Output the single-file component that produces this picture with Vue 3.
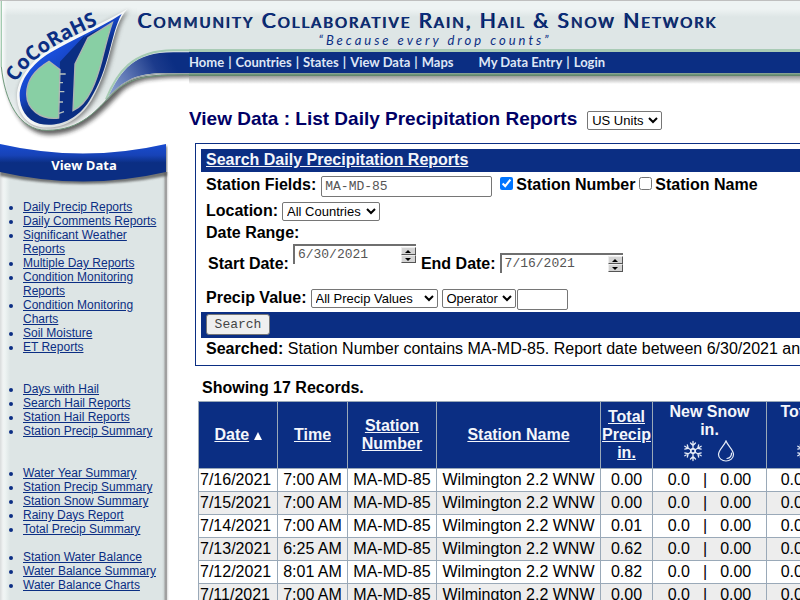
<script setup>
import { ref } from 'vue'

const linkGroups = [
  {
    links: [
      'Daily Precip Reports',
      'Daily Comments Reports',
      'Significant Weather Reports',
      'Multiple Day Reports',
      'Condition Monitoring Reports',
      'Condition Monitoring Charts',
      'Soil Moisture',
      'ET Reports',
    ],
  },
  { links: ['Days with Hail', 'Search Hail Reports', 'Station Hail Reports', 'Station Precip Summary'] },
  {
    links: [
      'Water Year Summary',
      'Station Precip Summary',
      'Station Snow Summary',
      'Rainy Days Report',
      'Total Precip Summary',
    ],
  },
  { close: true, links: ['Station Water Balance', 'Water Balance Summary', 'Water Balance Charts'] },
]

const siteLinks = ['Home', 'Countries', 'States', 'View Data', 'Maps']
const userLinks = ['My Data Entry', 'Login']

const records = [
  { date: '7/16/2021', time: '7:00 AM', precip: '0.00' },
  { date: '7/15/2021', time: '7:00 AM', precip: '0.00' },
  { date: '7/14/2021', time: '7:00 AM', precip: '0.01' },
  { date: '7/13/2021', time: '6:25 AM', precip: '0.62' },
  { date: '7/12/2021', time: '8:01 AM', precip: '0.82' },
  { date: '7/11/2021', time: '7:00 AM', precip: '0.00' },
]

const station = ref('MA-MD-85')
const startDate = ref('6/30/2021')
const endDate = ref('7/16/2021')
const byNumber = ref(true)
const byName = ref(false)
const precipValue = ref('')

function step(target, days) {
  const d = new Date(target.value)
  d.setDate(d.getDate() + days)
  target.value = `${d.getMonth() + 1}/${d.getDate()}/${d.getFullYear()}`
}
const stepStart = (n) => step(startDate, n)
const stepEnd = (n) => step(endDate, n)
</script>

<template>
  <div class="page">
    <aside class="left">
      <svg class="logo" viewBox="0 0 567 432" role="img" aria-label="CoCoRaHS">
        <defs>
          <linearGradient id="panel" x1="0" y1="0" x2="0" y2="1">
            <stop offset="0" stop-color="#eef3f3" />
            <stop offset="0.06" stop-color="#eef3f3" />
            <stop offset="0.12" stop-color="#dee6e6" />
            <stop offset="0.7" stop-color="#dee6e6" />
            <stop offset="1" stop-color="#f4f6f6" />
          </linearGradient>
          <linearGradient id="glow" x1="0" y1="0" x2="1" y2="0">
            <stop offset="0" stop-color="#fff" stop-opacity="0.9" />
            <stop offset="0.12" stop-color="#fff" stop-opacity="0" />
          </linearGradient>
          <linearGradient id="band" gradientUnits="userSpaceOnUse" x1="325" y1="285" x2="520" y2="185">
            <stop offset="0" stop-color="#8ea4d2" />
            <stop offset="0.35" stop-color="#5d76b4" />
            <stop offset="0.75" stop-color="#1c3b8c" />
            <stop offset="1" stop-color="#0b2e83" />
          </linearGradient>
          <linearGradient id="dropblue" gradientUnits="userSpaceOnUse" x1="120" y1="140" x2="230" y2="270">
            <stop offset="0" stop-color="#1c57ee" />
            <stop offset="0.5" stop-color="#1644c2" />
            <stop offset="0.75" stop-color="#0b2e83" />
          </linearGradient>
          <linearGradient id="rim" x1="0" y1="0" x2="1" y2="1">
            <stop offset="0" stop-color="#fff" />
            <stop offset="0.55" stop-color="#f3f5f5" />
            <stop offset="1" stop-color="#a8adad" />
          </linearGradient>
          <filter id="soft" x="-20%" y="-20%" width="140%" height="140%">
            <feGaussianBlur stdDeviation="7" />
          </filter>
        </defs>
        <path d="M12 200C20 300 60 402 145 404C255 406 315 325 365 275C415 234 450 232 640 232V150H12Z" fill="#222" opacity="0.7" filter="url(#soft)" />
        <path d="M5 0V200C14 300 55 390 140 391C245 391 290 330 340 275C395 222 450 223 600 222V0Z" fill="url(#panel)" />
        <path d="M5 0V200C14 300 55 390 140 391V0Z" fill="url(#glow)" />
        <path d="M324 291C365 210 400 157 520 157H600V219H500C410 219 375 238 324 291Z" fill="url(#band)" />
        <path d="M318 298C350 220 395 151 520 151H600" fill="none" stroke="#a5cbb2" stroke-width="6" />
        <path d="M318 301C370 240 410 221 500 221H600" fill="none" stroke="#9aa5a5" stroke-width="4" />
        <path d="M4 0V200C14 300 55 391 140 391C245 391 290 330 340 279C395 227 450 224 600 224" fill="none" stroke="#719b7e" stroke-width="3" />
        <path d="M4 0V200" fill="none" stroke="#a9d2b7" stroke-width="3" />
        <path d="M0 1.500H600" stroke="#bfbfbf" stroke-width="3" />
        <path d="M389 31C340 75 350 200 278 310C232 380 164 390 120 382C80 374 56 338 55 290C54 235 107 184 150 155C230 104 300 80 389 31Z" fill="#555" opacity="0.7" filter="url(#soft)" />
        <path d="M383 26C332 80 340 187 275 300C228 378 162 389 117 380C78 372 51 335 51 288C51 235 100 176 150 147C230 99 300 76 383 26Z" fill="url(#rim)" />
        <path d="M365 42C330 105 331 205 268 302C226 367 165 382 118 371C80 360 59 326 59 287C59 240 97 190 150 158C222 116 290 90 365 42Z" fill="url(#dropblue)" />
        <path d="M337 69C316 135 318 240 235 337L205 349L213 190L255 110C280 95 310 84 337 69Z" fill="#0b2e83" />
        <path d="M180 185L255 105L225 195L219 340L177 352Z" fill="#0b2e83" />
        <path d="M147 184L180 209L176 354C120 361 80 326 80 282C80 241 108 207 147 184Z" fill="#88cfa4" stroke="#aeb5b2" stroke-width="4" />
        <path d="M337 68L264 113L225 192L219 332C268 310 291 238 306 180C316 140 325 102 337 68Z" fill="#88cfa4" stroke="#aeb5b2" stroke-width="4" />
        <path d="M179 222H197M178 248H189M178 275H193M177 306H189M177 340L192 335" stroke="#b9c2c0" stroke-width="4" />
        <path id="arch" d="M50 248C80 186 155 130 345 52" fill="none" />
        <text class="logo-text"><textPath href="#arch">CoCoRaHS</textPath></text>
      </svg>

      <nav class="side" aria-label="View Data">
        <div class="side-head">
          <svg viewBox="0 0 168 42" preserveAspectRatio="none" aria-hidden="true">
            <defs>
              <linearGradient id="cap" x1="0" y1="0" x2="0" y2="1">
                <stop offset="0" stop-color="#184bd0" />
                <stop offset="0.3" stop-color="#1743b7" />
                <stop offset="0.5" stop-color="#0b2e83" />
                <stop offset="1" stop-color="#0b2e83" />
              </linearGradient>
              <filter id="capshade" x="-10%" y="-10%" width="120%" height="140%">
                <feGaussianBlur stdDeviation="1" />
              </filter>
            </defs>
            <path d="M0 2Q83 21 167 2V32Q83 48 0 32Z" fill="#444" opacity="0.7" filter="url(#capshade)" />
            <path d="M0 0Q83 19 166 0V28Q83 47 0 28Z" fill="url(#cap)" />
          </svg>
          <h2>View Data</h2>
        </div>
        <ul v-for="(group, i) in linkGroups" :key="i" :class="{ close: group.close }">
          <li v-for="link in group.links" :key="link"><a href="#">{{ link }}</a></li>
        </ul>
      </nav>
    </aside>

    <header class="masthead">
      <div class="name">Community Collaborative Rain, Hail &amp; Snow Network</div>
      <div class="motto">“Because every drop counts”</div>
    </header>

    <nav class="topnav" aria-label="Site">
      <div class="nav-group">
        <template v-for="(link, i) in siteLinks" :key="link">
          <span v-if="i">|</span><a href="#">{{ link }}</a>
        </template>
      </div>
      <div class="nav-group">
        <template v-for="(link, i) in userLinks" :key="link">
          <span v-if="i">|</span><a href="#">{{ link }}</a>
        </template>
      </div>
    </nav>

    <main>
      <div class="title">
        <h1>View Data : List Daily Precipitation Reports</h1>
        <select class="units" aria-label="Units"><option>US Units</option></select>
      </div>

      <form class="search" @submit.prevent>
        <div class="bar"><a href="#">Search Daily Precipitation Reports</a></div>
        <div class="row fields">
          <label for="station">Station Fields:</label>
          <input id="station" v-model="station" class="station" type="text" />
          <div class="checks">
            <input id="byNumber" v-model="byNumber" type="checkbox" /><label for="byNumber">Station Number</label>
            <input id="byName" v-model="byName" type="checkbox" /><label for="byName">Station Name</label>
          </div>
        </div>
        <div class="row">
          <label for="country">Location:</label>
          <select id="country" class="country"><option>All Countries</option></select>
        </div>
        <div class="row"><b>Date Range:</b></div>
        <div class="dates">
          <label for="start">Start Date:</label>
          <div class="date raised">
            <input id="start" v-model="startDate" type="text" />
            <div class="spin">
              <button type="button" aria-label="Later start date" @click="stepStart(1)"><svg viewBox="0 0 6 3"><path d="M0 3L3 0L6 3Z" /></svg></button>
              <button type="button" aria-label="Earlier start date" @click="stepStart(-1)"><svg viewBox="0 0 6 3"><path d="M0 0H6L3 3Z" /></svg></button>
            </div>
          </div>
          <label for="end">End Date:</label>
          <div class="date">
            <input id="end" v-model="endDate" type="text" />
            <div class="spin">
              <button type="button" aria-label="Later end date" @click="stepEnd(1)"><svg viewBox="0 0 6 3"><path d="M0 3L3 0L6 3Z" /></svg></button>
              <button type="button" aria-label="Earlier end date" @click="stepEnd(-1)"><svg viewBox="0 0 6 3"><path d="M0 0H6L3 3Z" /></svg></button>
            </div>
          </div>
        </div>
        <div class="row precip">
          <label for="precip">Precip Value:</label>
          <select id="precip" class="values"><option>All Precip Values</option></select>
          <div class="pair">
            <select class="operator" aria-label="Operator"><option>Operator</option></select>
            <input v-model="precipValue" class="amount" type="text" aria-label="Precip amount" />
          </div>
        </div>
        <div class="bar submit"><button type="submit">Search</button></div>
        <p class="searched"><b>Searched:</b> Station Number contains MA-MD-85. Report date between 6/30/2021 and 7/16/2021.</p>
      </form>

      <p class="count">Showing 17 Records.</p>

      <table>
        <colgroup>
          <col class="c-date" /><col class="c-time" /><col class="c-num" /><col class="c-name" />
          <col class="c-precip" /><col class="c-snow" /><col class="c-total" />
        </colgroup>
        <thead>
          <tr>
            <th><a href="#">Date</a> <svg class="sort" viewBox="0 0 8 8" aria-hidden="true"><path d="M0 8L4 0L8 8Z" fill="#fff" /></svg></th>
            <th><a href="#">Time</a></th>
            <th><a href="#">Station Number</a></th>
            <th><a href="#">Station Name</a></th>
            <th><a href="#">Total Precip in.</a></th>
            <th v-for="kind in ['New Snow', 'Total Snow']" :key="kind" class="snow">
              {{ kind }}<br />in.
              <div class="icons">
                <svg viewBox="0 0 20 22" fill="none" stroke="#e6ecf7" stroke-width="1.300" stroke-linecap="round">
                  <g v-for="a in [0, 60, 120, 180, 240, 300]" :key="a" :transform="`rotate(${a} 10 11)`">
                    <path d="M10 9V1.500M7.500 3L10 5.500L12.500 3M8 9.600L10 8.400L12 9.600" />
                  </g>
                </svg>
                <svg viewBox="0 0 20 22" fill="none" stroke="#e6ecf7" stroke-width="1.200" stroke-linecap="round">
                  <path d="M10 1C8 6 2.500 10 2.500 14.500A7.500 6.500 0 0 0 17.500 14.500C17.500 10 12 6 10 1Z" />
                  <path d="M15.500 13C15.700 16 13.800 18 11 18.500" />
                </svg>
              </div>
            </th>
          </tr>
        </thead>
        <tbody>
          <tr v-for="r in records" :key="r.date">
            <td class="start">{{ r.date }}</td>
            <td>{{ r.time }}</td>
            <td>MA-MD-85</td>
            <td>Wilmington 2.2 WNW</td>
            <td>{{ r.precip }}</td>
            <td v-for="n in 2" :key="n">
              <div class="amounts"><span>0.0</span><span>|</span><span>0.00</span></div>
            </td>
          </tr>
        </tbody>
      </table>
    </main>
  </div>
</template>

<style>
body {
  background: #fff;
  overflow-x: hidden;
}
</style>

<style scoped>
* {
  box-sizing: border-box;
}
.page {
  display: grid;
  grid-template-columns: 137px 52px minmax(0, 1fr);
  grid-template-rows: 49px 35px auto;
  height: 100vh;
  overflow: hidden;
  font-family: "Liberation Sans", Arial, sans-serif;
  font-size: 16px;
  line-height: 18px;
  color: #000;
}
.left {
  grid-column: 1 / 3;
  grid-row: 1 / 4;
  display: flex;
  flex-direction: column;
}
.logo {
  display: block;
  width: 189px;
  height: 144px;
  flex: none;
}
.logo-text {
  font: bold 60px "Open Sans", sans-serif;
  fill: #0b2e83;
}
.side {
  flex: 1;
  width: 169px;
  padding-bottom: 8px;
  background: linear-gradient(90deg, #d8dbdb 0, #f0f3f3 3px, #eef4f3 5px, #dde5e5 10px, #dde5e5 162px, #cdd5d5 164px, #a0a0a0 165px, #a0a0a0 167px, #dcdcdc 167px, #fff 169px) 0 28px no-repeat;
}
.side-head {
  display: grid;
  width: 168px;
  height: 42px;
}
.side-head > * {
  grid-area: 1 / 1;
}
.side-head svg {
  width: 100%;
  height: 100%;
}
.side-head h2 {
  margin: 0;
  align-self: center;
  text-align: center;
  color: #fff;
  font: bold 13px "Open Sans", sans-serif;
}
.side ul {
  margin: 28px 0 0;
  padding: 0 8px 0 23px;
  color: #0b2e83;
  font-size: 12px;
  line-height: 14px;
}
.side-head + ul,
.side ul.close {
  margin-top: 14px;
}
.side a {
  color: #0b2e83;
}
.masthead {
  grid-column: 2 / 4;
  grid-row: 1;
  padding-top: 9px;
  border-top: 1px solid #bfbfbf;
  background: linear-gradient(#eef3f3, #eef3f3 8px, #dee6e6 16px);
  white-space: nowrap;
}
.name {
  color: #0b2e83;
  font: 21px/20px Lato, sans-serif;
  font-variant: small-caps;
  letter-spacing: 2px;
  text-shadow: 1px 0 0 #06173f;
}
.motto {
  width: 596px;
  text-align: center;
  color: #0b2e83;
  font: italic 13px/20px Lato, sans-serif;
  letter-spacing: 3px;
}
.topnav {
  grid-column: 3;
  grid-row: 2;
  display: flex;
  align-items: flex-start;
  gap: 25px;
  height: 35px;
  padding-top: 4px;
  color: #dfe6f5;
  font: bold 13px/18px Lato, sans-serif;
  white-space: nowrap;
  background: linear-gradient(#a9cbb5 3px, #0b2e83 3px, #0b2e83 24px, #9da6a6 24px, #719b7e 25px, #5f7f69 27px, #999 27px, #fff 35px);
}
.nav-group {
  display: flex;
  gap: 4px;
}
.topnav a {
  color: inherit;
  text-decoration: none;
}
main {
  grid-column: 3;
  grid-row: 3;
  overflow: hidden;
  padding-top: 24px;
}
.title {
  display: flex;
  align-items: center;
  gap: 10px;
  height: 24px;
}
h1 {
  margin: 0 0 2px;
  font-size: 19px;
  line-height: 20px;
  color: #000066;
  white-space: nowrap;
}
select {
  height: 19px;
  margin: 0;
  padding: 0;
  border: 1px solid #767676;
  border-radius: 2px;
  background-color: #fff;
  color: #000;
  font: 13px "Liberation Sans", Arial, sans-serif;
}
.units {
  width: 75px;
}
.country {
  width: 98px;
}
.values {
  width: 127px;
}
.operator {
  width: 74px;
}
.search {
  width: 700px;
  margin: 11px 0 0 6px;
  padding: 5px;
  border: 1px solid #0b2e83;
  white-space: nowrap;
}
.bar {
  height: 23px;
  padding: 2px 5px;
  background: #0b2e83;
  font-weight: bold;
}
.bar a,
th a {
  color: #f4f6fb;
}
.row {
  display: flex;
  align-items: center;
  gap: 4px;
  height: 22px;
  padding-left: 5px;
}
.row.fields {
  height: 28px;
  gap: 5px;
  align-items: flex-start;
  padding-top: 4px;
}
.row.precip {
  height: 26px;
  align-items: flex-start;
  padding-top: 3px;
}
.row label,
.dates label {
  font-weight: bold;
}
input[type="text"] {
  margin: 0;
  padding: 1px 3px;
  border: 1px solid #767676;
  border-radius: 2px;
  background: #fff;
  color: #555;
  font: 13px "Liberation Mono", monospace;
}
.fields label {
  height: 18px;
}
.station {
  width: 171px;
  height: 21px;
}
.checks {
  display: flex;
  align-items: flex-start;
  padding-left: 3px;
}
.checks input {
  width: 13px;
  height: 13px;
  margin: 1px 3px 0 0;
}
.checks label + input {
  margin-left: 4px;
}
.dates {
  display: flex;
  align-items: flex-start;
  gap: 4px;
  height: 42px;
  padding: 9px 0 0 7px;
}
.dates label {
  padding-top: 2px;
}
.date {
  display: flex;
  width: 123px;
  height: 20px;
  margin-right: 1px;
  border-top: 2px solid #6f6f6f;
  border-left: 2px solid #6f6f6f;
}
.raised {
  margin-top: -9px;
}
.date input[type="text"] {
  flex: 1;
  min-width: 0;
  height: 16px;
  padding: 0 3px;
  border: 0;
}
.spin {
  display: flex;
  flex-direction: column;
  width: 15px;
  padding-top: 1px;
}
.spin button {
  display: flex;
  align-items: center;
  justify-content: center;
  height: 8px;
  padding: 0;
  border: 1px solid;
  border-color: #eee #555 #555 #eee;
  background: #d4d4d4;
}
.spin svg {
  width: 6px;
  height: 3px;
}
.pair {
  display: flex;
  align-items: flex-start;
  gap: 1px;
}
.amount {
  width: 51px;
  height: 21px;
}
.submit {
  height: 26px;
}
.submit button {
  display: block;
  width: 64px;
  height: 21px;
  padding: 0;
  border: 1px solid #767676;
  border-radius: 3px;
  background: #efefef;
  color: #444;
  font: 13px "Liberation Mono", monospace;
}
.searched {
  margin: 0;
  padding: 2px 5px;
}
.count {
  margin: 13px 0 4px 13px;
  font-weight: bold;
}
table {
  width: 681px;
  margin-left: 9px;
  table-layout: fixed;
  border-collapse: collapse;
}
.c-date {
  width: 79px;
}
.c-time {
  width: 70px;
}
.c-num {
  width: 89px;
}
.c-name {
  width: 164px;
}
.c-precip {
  width: 52px;
}
.c-snow {
  width: 114px;
}
.c-total {
  width: 112px;
}
th,
td {
  padding: 2px 1px;
  border: 1px solid #9aa9b8;
  text-align: center;
}
td {
  white-space: nowrap;
}
th {
  height: 67px;
  padding: 0 1px;
  background: #0b2e83;
  color: #f4f6fb;
}
th.snow {
  padding-top: 1px;
  vertical-align: top;
}
tbody tr {
  height: 23px;
}
tbody tr:nth-child(even) {
  background: #ededed;
}
.start {
  text-align: left;
}
.sort {
  width: 8px;
  height: 8px;
}
.icons {
  display: flex;
  justify-content: center;
  gap: 13px;
  padding-top: 1px;
}
.icons svg {
  width: 20px;
  height: 22px;
}
.amounts {
  display: flex;
  justify-content: center;
  gap: 13px;
}
</style>
